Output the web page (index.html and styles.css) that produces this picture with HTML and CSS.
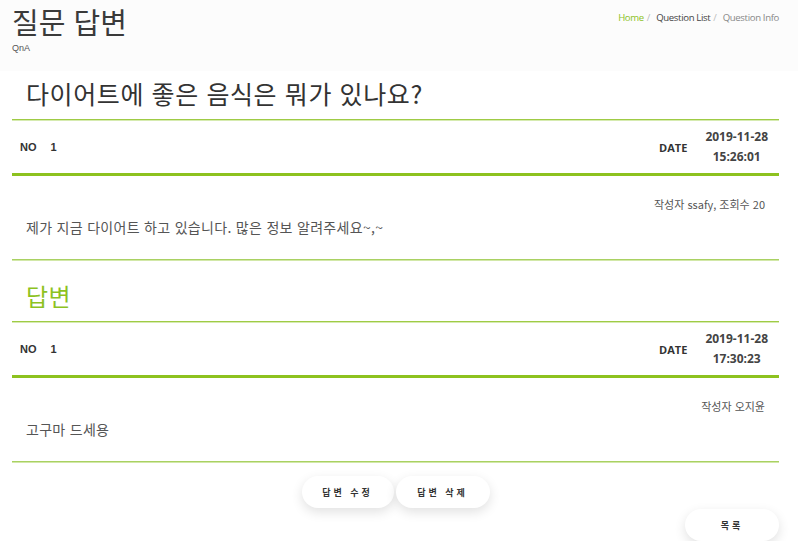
FILE: index.html
```html
<!DOCTYPE html>
<html lang="ko">
<head>
<meta charset="utf-8">
<title>질문 답변</title>
<link rel="stylesheet" href="styles.css">
</head>
<body>
<header class="page-header">
  <div class="container header-inner">
    <div class="header-title">
      <h1>질문 답변</h1>
      <p class="sub">QnA</p>
    </div>
    <nav class="crumbs">
      <a class="crumb home" href="#">Home</a><span class="sep">/</span>
      <a class="crumb list" href="#">Question List</a><span class="sep">/</span>
      <span class="crumb current">Question Info</span>
    </nav>
  </div>
</header>

<main class="container">
  <h2 class="q-title">다이어트에 좋은 음식은 뭐가 있나요?</h2>
  <div class="meta-row">
    <div class="no"><span class="label">NO</span><span class="val">1</span></div>
    <div class="date"><span class="label">DATE</span><span class="date-val">2019-11-28<br>15:26:01</span></div>
  </div>
  <div class="body-box">
    <div class="author">작성자 ssafy, 조회수 20</div>
    <div class="content">제가 지금 다이어트 하고 있습니다. 많은 정보 알려주세요~,~</div>
  </div>

  <h2 class="a-title">답변</h2>
  <div class="meta-row">
    <div class="no"><span class="label">NO</span><span class="val">1</span></div>
    <div class="date"><span class="label">DATE</span><span class="date-val">2019-11-28<br>17:30:23</span></div>
  </div>
  <div class="body-box">
    <div class="author">작성자 오지윤</div>
    <div class="content">고구마 드세용</div>
  </div>

  <div class="actions">
    <button class="pill w92">답변 수정</button>
    <button class="pill w94">답변 삭제</button>
  </div>
  <div class="list-wrap">
    <button class="pill w94">목록</button>
  </div>
</main>
</body>
</html>
```

FILE: styles.css
```css
* { box-sizing: border-box; }
html, body { margin: 0; padding: 0; background: #fff; }
body {
  font-family: "Noto Sans CJK KR", "Noto Sans", sans-serif;
  color: #333;
}
.container { width: 767px; margin-left: 12px; }

.page-header { background: #fcfcfc; height: 71px; }
.header-inner { display: flex; justify-content: space-between; align-items: flex-start; }
.header-title h1 {
  margin: 0;
  font-size: 29px; font-weight: 400; line-height: 42px; color: #3a3a3a;
}
.header-title .sub {
  margin: 0; font-family: "Liberation Sans", Arial, sans-serif;
  font-size: 9px; line-height: 12px; color: #555;
}
.crumbs {
  padding-top: 11px;
  font-family: "Open Sans", "Liberation Sans", sans-serif;
  font-size: 9.6px; line-height: 14px; letter-spacing: -0.35px;
}
.crumb { text-decoration: none; }
.home { color: #8dc21f; }
.list { color: #444; }
.current { color: #888; }
.sep { color: #bbb; margin: 0 4px 0 3px; }

.q-title {
  margin: 4px 0 8px 14px;
  font-size: 25px; font-weight: 400; line-height: 36px; color: #333;
  letter-spacing: 0.6px;
}
.a-title {
  margin: 18px 0 7px 14px;
  font-size: 24px; font-weight: 400; line-height: 36px; color: #8dc21f;
  letter-spacing: 0.5px;
}

.meta-row {
  display: flex; justify-content: space-between; align-items: center;
  border-top: 1px solid #9fcb45;
  box-shadow: inset 0 1px 0 #d6ebb0;
  border-bottom: 3px solid #8dc21f;
  padding: 7px 11px 6px 8px;
}
.no {
  display: flex; gap: 14px;
  font-family: "Liberation Sans", Arial, sans-serif; font-weight: 700;
  font-size: 11px; color: #333;
}
.date { display: flex; align-items: center; gap: 18px; }
.date .label {
  font-family: "Open Sans", "Liberation Sans", sans-serif; font-weight: 700;
  font-size: 11px; color: #333;
}
.date-val {
  font-family: "Open Sans", "Liberation Sans", sans-serif; font-weight: 700;
  font-size: 12px; line-height: 20px; color: #444; text-align: center;
}

.body-box {
  padding: 19px 14px 22px 14px;
  border-bottom: 1px solid #a9d162;
  box-shadow: 0 1px 0 #d2e8a8;
}
.author {
  text-align: right; font-size: 11px; line-height: 18px; color: #555;
}
.content {
  margin-top: 4px; font-size: 14px; line-height: 20px; color: #555;
  letter-spacing: 0.3px;
}

.actions {
  display: flex; justify-content: center; gap: 2px;
  margin-top: 14px;
}
.pill {
  height: 32px; border: none; border-radius: 16px; background: #fff;
  box-shadow: 0 4px 12px rgba(0, 0, 0, 0.12);
  font-family: "Noto Sans CJK KR", sans-serif;
  font-size: 9px; font-weight: 700; letter-spacing: 3px; color: #333;
  padding: 0;
}
.w92 { width: 92px; }
.w94 { width: 94px; }
.list-wrap { display: flex; justify-content: flex-end; margin-top: 1px; }
```
